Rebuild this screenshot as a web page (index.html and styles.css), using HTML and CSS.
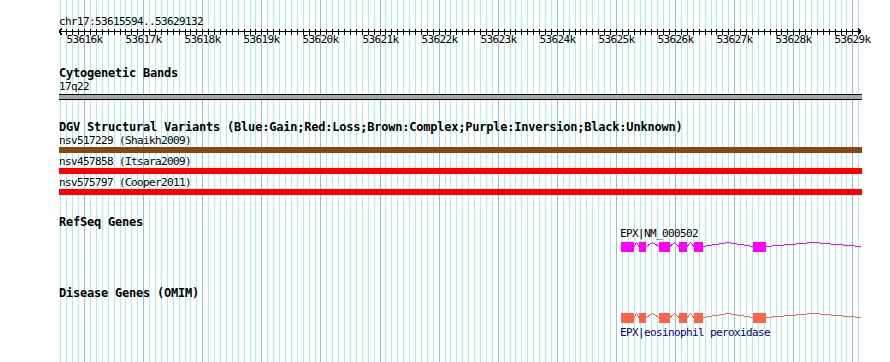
FILE: index.html
```html
<!DOCTYPE html>
<html lang="en">
<head>
    <meta charset="UTF-8">
    <meta name="viewport" content="width=device-width, initial-scale=1.0">
    <title>chr17:53615594..53629132</title>
    <link rel="stylesheet" href="styles.css">
</head>
<body>
    <div class="browser">
        <svg class="grid" id="grid" width="890" height="362" shape-rendering="crispEdges"></svg>

        <div class="panel">
            <div class="small-text">chr17:53615594..53629132</div>
            <svg class="ruler" id="ruler" width="803" height="18" viewBox="59 0 803 18" shape-rendering="crispEdges"></svg>

            <section class="track">
                <h2 class="track-title">Cytogenetic Bands</h2>
                <div class="small-text">17q22</div>
                <div class="band-bar"></div>
            </section>

            <section class="track">
                <h2 class="track-title">DGV Structural Variants (Blue:Gain;Red:Loss;Brown:Complex;Purple:Inversion;Black:Unknown)</h2>
                <div class="small-text">nsv517229 (Shaikh2009)</div>
                <div class="variant-bar complex"></div>
                <div class="small-text variant-label">nsv457858 (Itsara2009)</div>
                <div class="variant-bar loss"></div>
                <div class="small-text variant-label">nsv575797 (Cooper2011)</div>
                <div class="variant-bar loss"></div>
            </section>

            <section class="track">
                <h2 class="track-title">RefSeq Genes</h2>
                <div class="small-text gene-label refseq-label">EPX|NM_000502</div>
                <svg class="gene-model" data-color="#ff00ff" width="803" height="10" viewBox="59 0 803 10" shape-rendering="crispEdges"></svg>
            </section>

            <section class="track">
                <h2 class="track-title disease-title">Disease Genes (OMIM)</h2>
                <svg class="gene-model disease-model" data-color="#ff6347" width="803" height="10" viewBox="59 0 803 10" shape-rendering="crispEdges"></svg>
                <div class="small-text gene-label disease-label">EPX|eosinophil peroxidase</div>
            </section>
        </div>
    </div>

    <script>
        // View is chr17:53615594..53629132, grid every 100 bp
        const svgNS = 'http://www.w3.org/2000/svg';
        const firstLine = 53615600;
        const lastLine = 53629100;

        function bpToX(bp) {
            return Math.round(60.4 + (bp - firstLine) * 0.0591);
        }

        function addLine(svg, x1, y1, x2, y2, color) {
            const line = document.createElementNS(svgNS, 'line');
            line.setAttribute('x1', x1);
            line.setAttribute('y1', y1);
            line.setAttribute('x2', x2);
            line.setAttribute('y2', y2);
            line.setAttribute('stroke', color);
            svg.appendChild(line);
        }

        // Background grid
        const grid = document.getElementById('grid');
        for (let bp = firstLine; bp <= lastLine; bp += 100) {
            const x = bpToX(bp) + 0.5;
            const major = bp % 1000 === 0;
            addLine(grid, x, 0, x, 362, major ? '#87c3ee' : '#aaeeee');
        }

        // Ruler with ticks and labels
        const ruler = document.getElementById('ruler');
        addLine(ruler, 59, 3.5, 861, 3.5, '#000');
        addLine(ruler, 59, 3.5, 62, 0.5, '#000');
        addLine(ruler, 59, 3.5, 62, 6.5, '#000');
        addLine(ruler, 861, 3.5, 858, 0.5, '#000');
        addLine(ruler, 861, 3.5, 858, 6.5, '#000');
        for (let bp = firstLine; bp <= lastLine; bp += 100) {
            const x = bpToX(bp) + 0.5;
            addLine(ruler, x, 1, x, 7, '#000');
            if (bp % 1000 === 0) {
                const label = document.createElementNS(svgNS, 'text');
                label.setAttribute('x', x);
                label.setAttribute('y', 15);
                label.setAttribute('text-anchor', 'middle');
                label.setAttribute('class', 'ruler-label');
                label.textContent = (bp / 1000) + 'k';
                ruler.appendChild(label);
            }
        }

        // EPX exons in page pixels [start, end]
        const exons = [[621, 634], [639, 646], [659, 670], [679, 687], [694, 703], [753, 766]];
        const rightEdge = 861;

        document.querySelectorAll('.gene-model').forEach(svg => {
            const color = svg.getAttribute('data-color');
            const introns = [];
            for (let i = 0; i < exons.length; i++) {
                const start = exons[i][1];
                const end = i + 1 < exons.length ? exons[i + 1][0] : rightEdge;
                introns.push([start, end]);
            }
            introns.forEach(([a, b]) => {
                const hat = document.createElementNS(svgNS, 'polyline');
                const mid = (a + b) / 2;
                hat.setAttribute('points', `${a},4.5 ${mid},0.5 ${b},4.5`);
                hat.setAttribute('fill', 'none');
                hat.setAttribute('stroke', color);
                svg.appendChild(hat);
            });
            exons.forEach(([a, b]) => {
                const rect = document.createElementNS(svgNS, 'rect');
                rect.setAttribute('x', a);
                rect.setAttribute('y', 0);
                rect.setAttribute('width', b - a);
                rect.setAttribute('height', 10);
                rect.setAttribute('fill', color);
                svg.appendChild(rect);
            });
        });
    </script>
</body>
</html>
```

FILE: styles.css
```css
* {
    margin: 0;
    padding: 0;
    box-sizing: border-box;
}

body {
    background-color: #fff;
    color: #000;
    font-family: "DejaVu Sans Mono", "Liberation Mono", monospace;
}

.browser {
    position: relative;
    width: 890px;
    height: 362px;
    overflow: hidden;
}

.grid {
    position: absolute;
    top: 0;
    left: 0;
}

.panel {
    position: relative;
    margin-left: 59px;
    width: 803px;
    padding-top: 15px;
}

.small-text {
    font-size: 11px;
    letter-spacing: -0.62px;
    line-height: 13px;
    white-space: nowrap;
}

.ruler {
    display: block;
    overflow: visible;
}

.ruler-label {
    font-family: "DejaVu Sans Mono", "Liberation Mono", monospace;
    font-size: 11px;
    letter-spacing: -0.62px;
    fill: #000;
}

.track-title {
    font-size: 12px;
    font-weight: bold;
    letter-spacing: -0.22px;
    line-height: 13px;
    margin-top: 21px;
    white-space: nowrap;
}

.band-bar {
    height: 6px;
    margin-top: 1px;
    background-color: #a8a7aa;
    border-top: 1px solid #000;
    border-bottom: 1px solid #000;
}

.variant-bar {
    height: 6px;
}

.variant-bar.complex {
    background-color: #8b4513;
}

.variant-bar.loss {
    background-color: #ff0000;
}

.variant-label {
    margin-top: 2px;
}

.gene-model {
    display: block;
    overflow: visible;
}

.gene-label {
    position: relative;
    z-index: 1;
    margin-left: 561px;
}

.refseq-label {
    margin-top: -2px;
    margin-bottom: 2px;
}

.disease-title {
    margin-top: 35px;
}

.disease-model {
    margin-top: 13px;
}

.disease-label {
    margin-top: 3px;
    color: #000080;
}
```
